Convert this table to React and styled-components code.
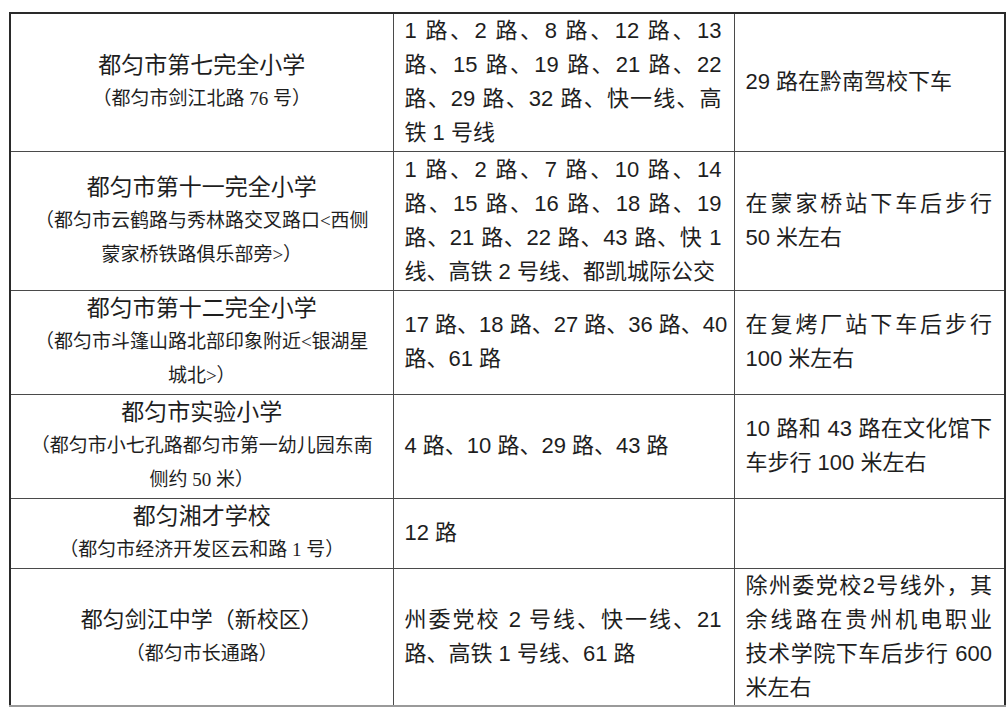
import React from 'react';
import styled, { createGlobalStyle } from 'styled-components';

const GlobalStyle = createGlobalStyle`
  html, body {
    margin: 0;
    background: #ffffff;
  }
`;

const Page = styled.div`
  padding: 12px 0 0 9px;
  width: 1008px;
  height: 707px;
  box-sizing: border-box;
  overflow: hidden;
  color: #1e1e1e;
`;

const Table = styled.table`
  border-collapse: collapse;
  table-layout: fixed;
  width: 995px;
  border-top: 2px solid #2a2a2a;
  border-left: 2px solid #2a2a2a;
  border-right: 2px solid #2a2a2a;
  border-bottom: 2px solid #9a9a9a;
`;

const Row = styled.tr`
  height: ${(p) => p.$height}px;
`;

const Cell = styled.td`
  border: 1px solid #4a4a4a;
  vertical-align: middle;
  padding: ${(p) => (p.$center ? '0 14px' : '0 12px 0 11px')};
  text-align: ${(p) => (p.$center ? 'center' : 'left')};
  font-family: 'Liberation Sans', 'Noto Sans CJK SC', sans-serif;
  font-size: 22px;
  line-height: 34px;
`;

const Name = styled.div`
  font-size: ${(p) => (p.$narrow ? 22 : 23)}px;
  line-height: 34px;
  white-space: nowrap;
`;

const Addr = styled.div`
  font-family: 'Liberation Serif', 'Noto Sans CJK SC', serif;
  font-size: 19px;
  line-height: 34px;
  white-space: nowrap;
`;

const Line = styled.div`
  white-space: nowrap;
  text-align: ${(p) => (p.$fill ? 'justify' : 'left')};
  text-align-last: ${(p) => (p.$fill ? 'justify' : 'left')};
`;

const rows = [
  {
    height: 138,
    name: '都匀市第七完全小学',
    addr: ['（都匀市剑江北路 76 号）'],
    routes: ['1 路、2 路、8 路、12 路、13', '路、15 路、19 路、21 路、22', '路、29 路、32 路、快一线、高', '铁 1 号线'],
    tip: ['29 路在黔南驾校下车'],
  },
  {
    height: 139,
    name: '都匀市第十一完全小学',
    addr: ['（都匀市云鹤路与秀林路交叉路口<西侧', '蒙家桥铁路俱乐部旁>）'],
    routes: ['1 路、2 路、7 路、10 路、14', '路、15 路、16 路、18 路、19', '路、21 路、22 路、43 路、快 1', '线、高铁 2 号线、都凯城际公交'],
    tip: ['在蒙家桥站下车后步行', '50 米左右'],
  },
  {
    height: 104,
    name: '都匀市第十二完全小学',
    addr: ['（都匀市斗篷山路北部印象附近<银湖星', '城北>）'],
    routes: ['17 路、18 路、27 路、36 路、40', '路、61 路'],
    tip: ['在复烤厂站下车后步行', '100 米左右'],
  },
  {
    height: 104,
    name: '都匀市实验小学',
    addr: ['（都匀市小七孔路都匀市第一幼儿园东南', '侧约 50 米）'],
    routes: ['4 路、10 路、29 路、43 路'],
    tip: ['10 路和 43 路在文化馆下', '车步行 100 米左右'],
  },
  {
    height: 70,
    name: '都匀湘才学校',
    addr: ['（都匀市经济开发区云和路 1 号）'],
    routes: ['12 路'],
    tip: [],
  },
  {
    height: 137,
    name: '都匀剑江中学（新校区）',
    narrow: true,
    addr: ['（都匀市长通路）'],
    routes: ['州委党校 2 号线、快一线、21', '路、高铁 1 号线、61 路'],
    tip: ['除州委党校2号线外，其', '余线路在贵州机电职业', '技术学院下车后步行 600', '米左右'],
  },
];

function Lines({ items }) {
  return items.map((text, i) => (
    <Line key={i} $fill={i < items.length - 1}>
      {text}
    </Line>
  ));
}

export default function App() {
  return (
    <>
      <GlobalStyle />
      <Page>
        <Table>
          <colgroup>
            <col style={{ width: 383 }} />
            <col style={{ width: 341 }} />
            <col style={{ width: 271 }} />
          </colgroup>
          <tbody>
            {rows.map((row, index) => (
              <Row key={index} $height={row.height}>
                <Cell $center>
                  <Name $narrow={row.narrow}>{row.name}</Name>
                  {row.addr.map((a, i) => (
                    <Addr key={i}>{a}</Addr>
                  ))}
                </Cell>
                <Cell>
                  <Lines items={row.routes} />
                </Cell>
                <Cell>
                  <Lines items={row.tip} />
                </Cell>
              </Row>
            ))}
          </tbody>
        </Table>
      </Page>
    </>
  );
}
